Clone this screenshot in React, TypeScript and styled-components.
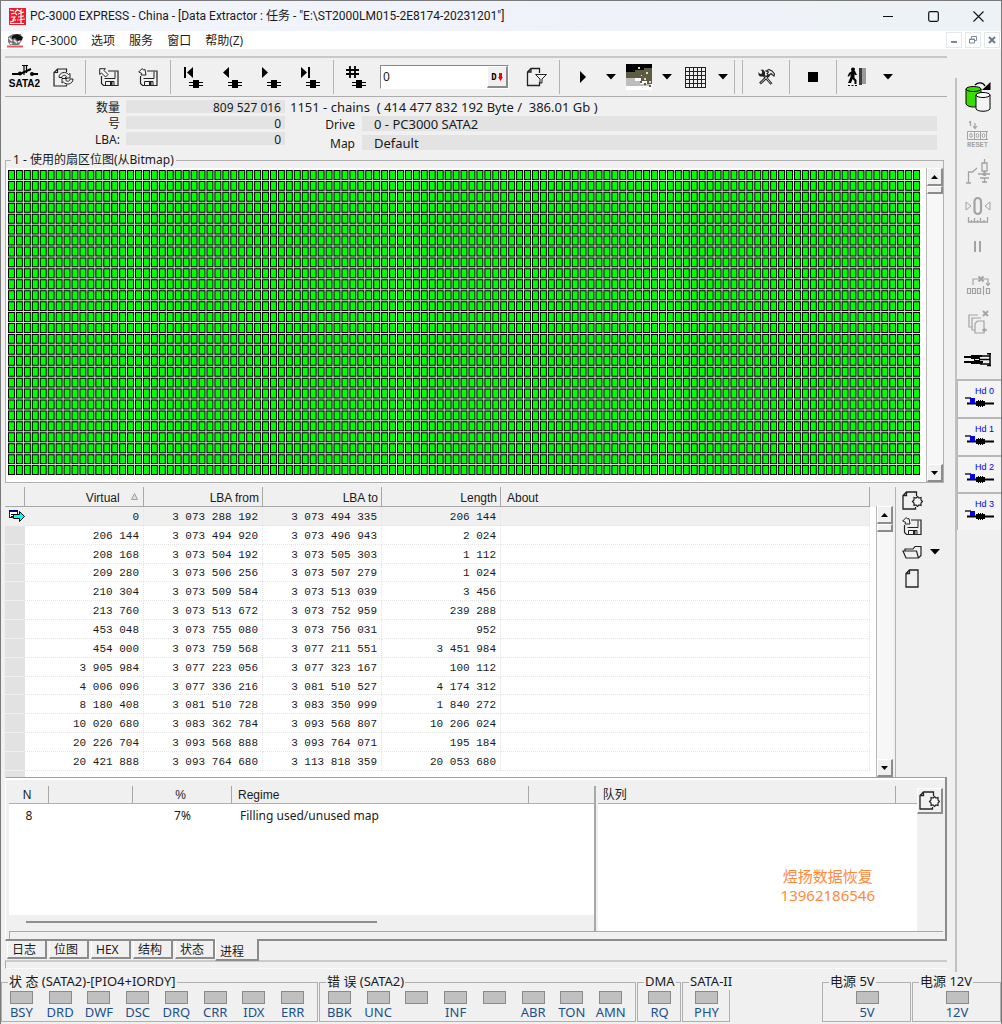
import React from "react";
import styled, { createGlobalStyle, css } from "styled-components";

const GlobalStyle = createGlobalStyle`
  * { box-sizing: border-box; }
  html, body { margin: 0; padding: 0; background: #f0f0f0; }
  body, button, input, legend, th, td {
    font-family: "Noto Sans", "Noto Sans CJK SC", sans-serif;
    font-size: 12px;
    line-height: 16px;
    color: #1a1a1a;
  }
  button { margin: 0; padding: 0; border: 0; background: none; }
  svg { display: block; flex: none; }
`;

/* ---------- frame ---------- */

const Window = styled.div`
  display: flex;
  flex-direction: column;
  min-height: 100vh;
  border: 1px solid #7a7a7a;
  background: #f0f0f0;
`;

const TitleBar = styled.header`
  display: flex;
  align-items: center;
  height: 30px;
  padding-left: 8px;
  background: linear-gradient(90deg, #f2f4fb, #edf2f7);
`;

const TitleText = styled.h1`
  flex: 1;
  margin: 0 0 0 4px;
  font-family: Roboto, "Noto Sans CJK SC", sans-serif;
  font-size: 12px;
  font-weight: 400;
  line-height: 16px;
  white-space: nowrap;
`;

const CaptionButton = styled.button`
  display: grid;
  place-items: center;
  width: 45px;
  height: 30px;
`;

const MenuBar = styled.nav`
  display: flex;
  align-items: center;
  height: 18px;
  padding-left: 6px;
  background: #fff;
`;

const MenuItem = styled.button`
  padding: 2px 7px 0;
  white-space: nowrap;
  font-family: "Open Sans", "Noto Sans CJK SC", sans-serif;
`;

const ChildButtons = styled.div`
  display: flex;
  gap: 3px;
  margin-left: auto;
  padding-right: 1px;
`;

const ChildButton = styled.button`
  display: grid;
  place-items: center;
  width: 16px;
  height: 16px;
  border: 1px solid #e6e9ec;
`;

const Body = styled.div`
  display: flex;
  flex: 1;
`;

const Main = styled.main`
  display: flex;
  flex: 1;
  flex-direction: column;
  min-width: 0;
  padding: 7px 8px 0 4px;
`;

/* ---------- toolbar ---------- */

const Toolbar = styled.div`
  display: flex;
  align-items: center;
  height: 41px;
  border-top: 2px solid #c8c8c8;
  border-bottom: 1px solid #adadad;
`;

const ToolGroup = styled.div<{ $first?: boolean; $last?: boolean }>`
  display: flex;
  align-items: center;
  height: 34px;
  min-width: 8px;
  padding: 0 ${(p) => (p.$first ? 2 : 3)}px 0 ${(p) => (p.$first ? 0 : 3)}px;
  border-right: ${(p) => (p.$last ? 0 : 1)}px solid #b4b4b4;
`;

const ToolButton = styled.button<{ $wide?: boolean }>`
  display: grid;
  place-items: center;
  width: ${(p) => (p.$wide ? 40 : 39)}px;
  height: 34px;
`;

const DropButton = styled.button`
  display: grid;
  place-items: center;
  width: 16px;
  height: 32px;
`;

const SataIcon = styled.span`
  display: flex;
  flex-direction: column;
  align-items: center;
  font-family: "Liberation Sans", sans-serif;
  font-size: 10px;
  font-weight: 700;
  line-height: 12px;
  color: #000;
`;

const NumberBox = styled.label`
  display: flex;
  width: 129px;
  height: 24px;
  margin: 0 8px 0 4px;
  border: 1px solid #8a8a8a;
  border-right-color: #fff;
  border-bottom-color: #fff;
  background: #fff;
`;

const NumberInput = styled.input`
  flex: 1;
  min-width: 0;
  padding: 0 2px;
  border: 0;
  outline: 0;
  background: none;
`;

const raised = css`
  border: 1px solid #fff;
  border-right: 2px solid #8c8c8c;
  border-bottom: 2px solid #8c8c8c;
  background: #f0f0f0;
`;

const NumberMode = styled.button`
  ${raised}
  display: grid;
  place-items: center;
  width: 21px;
  height: 22px;
`;

const ModeText = styled.span`
  display: flex;
  align-items: center;
  gap: 1px;
  font-family: "DejaVu Sans Mono", monospace;
  font-size: 9px;
  font-weight: 700;
  line-height: 10px;
  color: #000;
`;

/* ---------- summary ---------- */

const Summary = styled.section`
  display: flex;
  gap: 5px;
  height: 55px;
  padding: 2px 10px 0 0;
`;

const Totals = styled.dl`
  display: grid;
  grid-template-columns: 115px 159px;
  grid-auto-rows: 13px;
  gap: 3px 6px;
  margin: 1px 0 0;
  line-height: 15px;
  text-align: right;
  dt, dd { margin: 0; }
  dd { padding-right: 4px; background: #e3e3e3; }
`;

const Details = styled.div`
  flex: 1;
  min-width: 0;
`;

const Chains = styled.p`
  margin: 0;
  height: 17px;
  font-size: 13px;
  line-height: 17px;
  white-space: pre;
`;

const Params = styled.dl`
  display: grid;
  grid-template-columns: 65px 1fr;
  grid-auto-rows: 15px;
  gap: 4px 7px;
  margin: 0;
  line-height: 17px;
  dt, dd { margin: 0; }
  dt { text-align: right; }
  dd { padding-left: 12px; font-size: 13px; background: #e3e3e3; }
`;

/* ---------- bitmap ---------- */

const GroupBox = styled.fieldset`
  min-width: 0;
  margin: 0 3px 0 0;
  padding: 0;
  border: 1px solid #b0b0b0;
  legend { margin-left: 5px; padding: 0 2px; white-space: nowrap; }
`;

const BitmapArea = styled.div`
  display: flex;
`;

const BitmapCanvas = styled.div`
  flex: 1;
  padding: 2px 5px 6px 2px;
  background: #fff;
`;

const ScrollTrack = styled.div<{ $top?: number }>`
  display: flex;
  flex: none;
  flex-direction: column;
  width: 17px;
  margin-top: ${(p) => p.$top ?? 0}px;
  border-left: 1px solid #b8b8b8;
  background: #f7f7f7;
`;

const ScrollButton = styled.button`
  ${raised}
  display: grid;
  place-items: center;
  height: 18px;
`;

const ScrollThumb = styled.div`
  ${raised}
  height: 8px;
  margin-bottom: auto;
`;

/* ---------- chain table ---------- */

const ChainPane = styled.section`
  display: flex;
  height: 290px;
  margin-top: 4px;
`;

const ChainTable = styled.table`
  flex: 1;
  width: 100%;
  height: 290px;
  table-layout: fixed;
  border-collapse: separate;
  border-spacing: 0;
  background: #fff;
`;

const HeadCell = styled.th<{ $left?: boolean }>`
  height: 20px;
  padding: 2px 3px 0 6px;
  border-right: 1px solid #a8a8a8;
  border-bottom: 1px solid #a8a8a8;
  background: #f0f0f0;
  font-family: "Liberation Sans", "Noto Sans CJK SC", sans-serif;
  font-weight: 400;
  line-height: 16px;
  text-align: ${(p) => (p.$left ? "left" : "right")};
  white-space: nowrap;
  svg { display: inline-block; margin: 0 2px 2px 8px; }
`;

const NumCell = styled.td`
  padding: 2px 4px 0 0;
  border-right: 1px dotted #e4e4e4;
  border-bottom: 1px dotted #e4e4e4;
  font-family: "Liberation Mono", monospace;
  font-size: 11px;
  line-height: 14px;
  text-align: right;
  white-space: pre;
`;

const GutterCell = styled.td`
  padding: 0 0 0 4px;
  border-bottom: 1px solid #efefef;
  background: #e2e2e2;
`;

const ChainRow = styled.tr<{ $active?: boolean }>`
  background: ${(p) => (p.$active ? "#f0f0f0" : "#fff")};
  ${GutterCell} { ${(p) => p.$active && "background: #f0f0f0;"} }
`;

const TailRow = styled.tr`
  height: 6px;
  td { height: 6px; padding: 0; line-height: 1px; border: 0; }
`;

const TableMargin = styled.div`
  width: 6px;
  margin-top: 20px;
  background: #fff;
`;

const ChainTools = styled.div`
  display: grid;
  grid-template-columns: 26px 20px;
  grid-auto-rows: 26px;
  align-content: start;
  width: 52px;
  margin-left: 2px;
  padding-left: 3px;
  border-left: 1px solid #b4b4b4;
`;

const SmallTool = styled.button<{ $start?: boolean }>`
  display: grid;
  place-items: center;
  grid-column: ${(p) => (p.$start ? 1 : "auto")};
`;

/* ---------- process panel ---------- */

const Panel = styled.section`
  display: flex;
  flex-direction: column;
  height: 164px;
  padding: 6px 2px 0 3px;
  border: 1px solid #fff;
  border-top: 1px solid #a0a0a0;
  border-right: 2px solid #8c8c8c;
  border-bottom: 2px solid #8c8c8c;
  box-shadow: inset 0 2px #fff;
`;

const PanelRow = styled.div`
  display: flex;
  flex: 1;
  min-height: 0;
  padding-top: 2px;
`;

const JobPane = styled.div`
  display: flex;
  flex: 586 1 0;
  flex-direction: column;
  border-right: 2px solid #a8a8a8;
`;

const JobBody = styled.div`
  flex: 1;
  background: #fff;
`;

const JobTable = styled.table`
  width: 100%;
  table-layout: fixed;
  border-spacing: 0;
  td { height: 24px; padding: 0 8px; white-space: nowrap; }
`;

const JobHead = styled.th<{ $left?: boolean; $last?: boolean }>`
  height: 18px;
  padding: 0 9px 0 6px;
  border-right: ${(p) => (p.$last ? 0 : 1)}px solid #a8a8a8;
  border-bottom: 1px solid #b0b0b0;
  background: #f0f0f0;
  font-family: "Liberation Sans", sans-serif;
  font-weight: 400;
  line-height: 16px;
  text-align: ${(p) => (p.$left ? "left" : "center")};
`;

const JobCell = styled.td<{ $center?: boolean }>`
  text-align: ${(p) => (p.$center ? "center" : "left")};
`;

const Slider = styled.div`
  height: 16px;
  padding: 6px 37% 0 17px;
  &::before {
    content: "";
    display: block;
    height: 2px;
    background: #8e8e8e;
  }
`;

const QueuePane = styled.div`
  display: flex;
  flex: 320 1 0;
  flex-direction: column;
  margin-left: 2px;
  background: #fff;
`;

const QueueHead = styled.h2`
  height: 18px;
  margin: 0;
  padding-left: 5px;
  border-bottom: 1px solid #b0b0b0;
  background: linear-gradient(#a8a8a8, #a8a8a8) right 21px top / 1px 100% no-repeat #f0f0f0;
  font-size: 12px;
  font-weight: 400;
  line-height: 18px;
`;

const Watermark = styled.p`
  margin: 63px 42px 0 auto;
  font-size: 15px;
  line-height: 19px;
  text-align: center;
  color: #ff8a3c;
`;

const QueueTools = styled.div`
  width: 26px;
  padding-top: 2px;
`;

const QueueButton = styled.button`
  ${raised}
  display: grid;
  place-items: center;
  width: 26px;
  height: 26px;
`;

const Groove = styled.div`
  height: 8px;
  border-top: 1px solid #a8a8a8;
  border-left: 1px solid #a8a8a8;
`;

const Tabs = styled.div`
  display: flex;
  gap: 2px;
  height: 19px;
  padding-left: 2px;
`;

const Tab = styled.button<{ $active?: boolean }>`
  width: ${(p) => (p.$active ? 44 : 40)}px;
  height: ${(p) => (p.$active ? 20 : 18)}px;
  padding: 1px 6px 0 4px;
  border: 1px solid #fff;
  border-top: 0;
  border-right: 2px solid #8c8c8c;
  border-bottom: 2px solid #8c8c8c;
  background: #f0f0f0;
  line-height: 15px;
  text-align: left;
  ${(p) =>
    p.$active &&
    css`
      z-index: 1;
      margin: -2px 0 0 -2px;
      height: 22px;
      padding-top: 4px;
    `}
`;

const BottomGroove = styled.div`
  height: 9px;
  margin-bottom: 5px;
  border-top: 2px solid #cacaca;
  border-left: 1px solid #a8a8a8;
  border-bottom: 1px solid #fafafa;
`;

/* ---------- side bar ---------- */

const SideBar = styled.aside`
  width: 46px;
  margin: 29px 0 2px;
  border-left: 2px solid #c0c0c0;
`;

const SideList = styled.div`
  display: grid;
  grid-template-rows: repeat(12, 1fr);
  height: 452px;
`;

const SideButton = styled.button`
  display: grid;
  place-items: center;
  padding-right: 2px;
`;

const HeadButton = styled.button`
  display: flex;
  flex-direction: column;
  align-items: flex-end;
  padding: 5px 7px 0 0;
  border-top: 2px solid #b8b8b8;
  border-left: 1px solid #b8b8b8;
  background: #f4f4f4;
  font-family: "Liberation Sans", sans-serif;
  font-size: 9px;
  line-height: 10px;
  color: #0000f0;
`;

/* ---------- status bar ---------- */

const StatusBar = styled.footer`
  display: flex;
  gap: 1px;
  padding-bottom: 2px;
`;

const LampGroup = styled.fieldset<{ $share: number; $single?: boolean }>`
  display: flex;
  flex: ${(p) => p.$share} 1 0;
  min-width: 0;
  height: 48px;
  margin: 0;
  padding: ${(p) => (p.$single ? "0 2px 0 3px" : "0 5px 0 0")};
  border: 1px solid #b0b0b0;
  legend {
    height: 16px;
    margin-left: ${(p) => (p.$single ? 3 : 6)}px;
    padding: 0 1px;
    font-size: 13px;
    line-height: 15px;
    white-space: nowrap;
  }
`;

const StatusGap = styled.div`
  flex: 90 1 0;
`;

const Lamp = styled.div`
  display: flex;
  flex: 1 1 0;
  flex-direction: column;
  align-items: center;
  min-width: 0;
  padding-top: 1px;
  font-size: 13px;
  line-height: 16px;
  color: #1c4f8c;
  &::before {
    content: "";
    width: 21px;
    height: 11px;
    border: 1px solid #8a8a8a;
    background: #c0c0c0;
  }
`;

/* ---------- icons ---------- */

const Icon = ({
  w,
  h,
  crisp,
  children,
}: {
  w: number;
  h: number;
  crisp?: boolean;
  children: React.ReactNode;
}) => (
  <svg
    width={w}
    height={h}
    viewBox={`0 0 ${w} ${h}`}
    fill="none"
    shapeRendering={crisp ? "crispEdges" : "auto"}
    aria-hidden="true"
  >
    {children}
  </svg>
);

const AppLogo = () => (
  <Icon w={17} h={17}>
    <rect width="17" height="17" fill="#ec1c2b" />
    <path d="M1 2l4 1M6 4l3-3M8 2l3 1M11 4l2-3M2 6l4-1 2 2M12 2v13M9 6l6-2M9 9l6-1M2 9h4l-2 3h3M1 14l4-1M8 12l8-1M1 15.500h14" stroke="#fff" strokeWidth="1.100" />
  </Icon>
);

const MenuLogo = () => (
  <Icon w={17} h={15}>
    <path d="M1 4l5-3h8l1 6-3 5H3l-2-3z" fill="#777" />
    <path d="M5 3l5-2 6 3-1 3-4 1-3-3-3 1z" fill="#111" />
    <path d="M2 5l3 3M7 7l3 3M3 10l2 1M11 9l2-1" stroke="#eee" strokeWidth="1.500" />
    <path d="M0 13.500h16" stroke="#e35b62" strokeWidth="2" />
  </Icon>
);

const SataGlyph = () => (
  <Icon w={28} h={14}>
    <path d="M1 10h8l11-5M20 10h7" stroke="#000" strokeWidth="2" />
    <path d="M11 1.500h6" stroke="#000" />
    <path d="M13 1v10M15.500 1v8" stroke="#000" strokeWidth="1.200" />
    <circle cx="9" cy="9.500" r="2" fill="#000" />
    <circle cx="21" cy="10" r="2" fill="#000" />
  </Icon>
);

const RefreshPage = () => (
  <Icon w={21} h={19}>
    <path d="M13.500 4V1H4.500L1 4.500V18h12.500v-1.500M4.500 1v3.500H1" stroke="#222" strokeWidth="1.200" />
    <path d="M6 9.500C6 4 13 3 15.500 6.500l1.500-1V10h-5l1.500-1.500C12 6.500 9 7 9 9.500zM20 11c0 5.500-7 6.500-9.500 3L9 15v-4.500h5L12.500 12c1.500 2 4.500 1.500 4.500-1z" stroke="#222" strokeWidth="1" fill="#f0f0f0" />
  </Icon>
);

const Disk = ({ up }: { up?: boolean }) => (
  <Icon w={20} h={19}>
    <path d="M9 3h10v14.500H4.500l-2-2V8" stroke="#222" strokeWidth="1.200" />
    <path d="M5.500 10.500h10.500V3.500" stroke="#222" />
    <path d="M6.500 17.500v-4h8.500v4" stroke="#222" />
    <path d="M11 14h2.500v3.500H11z" fill="#222" />
    {up ? (
      <path d="M.7.7h5.600L5 2.500l4 4L6.500 9l-4-4L.7 6.500z" fill="#f4f4f4" stroke="#222" />
    ) : (
      <path d="M.7 4l3.500-3.500L5.500 2 7 1.500l1 5.500H3l.7-1.700z" fill="#f4f4f4" stroke="#222" />
    )}
  </Icon>
);

const headStack = (
  <g>
    <path d="M6 16.500h14M6 19.500h14" stroke="#000" strokeWidth="1.200" />
    <path d="M10 14h6v2h-1v1h1v2h-1v1h1v2h-6v-2h1v-1h-1v-2h1v-1h-1z" fill="#000" />
  </g>
);

const marks: Record<string, React.ReactNode> = {
  first: <path d="M1 1h2v11H1zM10 1v11L4 6.500z" fill="#000" />,
  prev: <path d="M7 1v11L1 6.500z" fill="#000" />,
  next: <path d="M1 1v11l6-5.500z" fill="#000" />,
  last: <path d="M1 1v11l6-5.500zM8 1h2v11H8z" fill="#000" />,
  hash: <path d="M4 0v12M9 0v12M0 4h13M0 8h13" stroke="#000" strokeWidth="1.800" />,
};

const StepIcon = ({ mark }: { mark: string }) => (
  <Icon w={21} h={22}>
    {marks[mark]}
    {headStack}
  </Icon>
);

const FilterPage = () => (
  <Icon w={22} h={20}>
    <path d="M13.500 6V1.500H5L1.500 5v13.500h12V15M5 1.500V5H1.500" stroke="#222" strokeWidth="1.300" />
    <path d="M9.500 7.500h11L16 12v4h-2v-4z" fill="#f0f0f0" stroke="#222" />
  </Icon>
);

const DownArrow = () => (
  <Icon w={10} h={6}>
    <path d="M0 0h10L5 5.500z" fill="#000" />
  </Icon>
);

const PlayIcon = () => (
  <Icon w={8} h={12}>
    <path d="M1 0v12l6-6z" fill="#000" />
  </Icon>
);

const TerrainIcon = () => (
  <Icon w={26} h={26} crisp>
    <rect width="26" height="26" fill="#fff" />
    <path d="M0 0h26v9H0z" fill="#000" />
    <path d="M0 8h9V6h9V4h8v16h-5v-3h-6v-3H0z" fill="#5d5c40" />
    <path d="M0 14h9v3h5v3h10v2H0z" fill="#bdbdbd" />
    <path d="M12 3h2v2h-2zM20 8h2v2h-2zM18 14h2v2h-2zM23 17h2v2h-2zM15 11h1v1h-1z" fill="#d8d8cc" />
    <path d="M14 17h2v2h-2zM18 19h2v2h-2zM23 21h2v2h-2z" fill="#5d5c40" />
  </Icon>
);

const GridIcon = () => (
  <Icon w={21} h={21} crisp>
    <path d="M0 .5h21M0 4.500h21M0 8.500h21M0 12.500h21M0 16.500h21M0 20.500h21M.5 0v21M4.500 0v21M8.500 0v21M12.500 0v21M16.500 0v21M20.500 0v21" stroke="#222" />
  </Icon>
);

const ToolsIcon = () => (
  <Icon w={17} h={17}>
    <path d="M2 14.500L11 6M13.500 15L5 5.500" stroke="#222" strokeWidth="2.600" />
    <path d="M2.500 14L9 8M13 14.500L7 7.500" stroke="#f0f0f0" strokeWidth="0.800" />
    <path d="M.5 6V3L2 5l2-.5V2L2.500 1 5 .5 7 3v3L5 7.500H2z" fill="#222" />
    <path d="M8 2l3-1.500L14 2l2.500 3-.5 2-2-1.500-1-1-2 2-2-2 1.500-1.500z" fill="#f0f0f0" stroke="#222" strokeWidth="1.100" />
  </Icon>
);

const StopIcon = () => (
  <Icon w={10} h={10} crisp>
    <rect width="10" height="10" fill="#000" />
  </Icon>
);

const ExitIcon = () => (
  <Icon w={26} h={20}>
    <circle cx="6" cy="2.500" r="2" fill="#000" />
    <path d="M5 4h3l2 4h-2l-.5-1V11l2 2v4H7.500v-3L5.500 12 4 16H1l2.500-6V7L2 9.500H.5L2 6z" fill="#000" />
    <path d="M1 18.500h9" stroke="#000" strokeDasharray="2 1.500" />
    <path d="M12 1h3v17h-3z" fill="#3c3c3c" />
    <path d="M15 1h4v16h-4z" fill="#999" />
  </Icon>
);

const NewPage = () => (
  <Icon w={21} h={19}>
    <path d="M14.500 5V1H4.500L1 4.500V18h12.500v-2M4.500 1v3.500H1" stroke="#222" strokeWidth="1.300" />
    <path d="M12 6.500l2 .5 1.500-1.500L17 7l2-.5v2.500l1.500 1.500L19 12v2.500L17 14l-1.500 1.500L14 14l-2 .5V12l-1.500-1.500L12 9z" stroke="#222" strokeWidth="1.200" fill="#f4f4f4" />
  </Icon>
);

const OpenFolder = () => (
  <Icon w={21} h={14}>
    <path d="M3 6V4h8l2-2.500h6v9L16.500 13H4L1 6h13.500l2 7" stroke="#222" strokeWidth="1.200" />
  </Icon>
);

const BlankPage = () => (
  <Icon w={14} h={19}>
    <path d="M13 1H4.500L1 4.500V18h12zM4.500 1v3.500H1" stroke="#222" strokeWidth="1.300" />
  </Icon>
);

const RowPointer = () => (
  <Icon w={16} h={13} crisp>
    <path d="M.5 1.500h8v7h-8z" fill="#fff" stroke="#222" />
    <path d="M0 1h9v2H0z" fill="#000080" />
    <path d="M2 5h5M2 7h3" stroke="#000" />
    <path d="M4.500 5.500h6v-3l5 5-5 5v-3h-6z" fill="#00ffff" stroke="#000" shapeRendering="auto" />
  </Icon>
);

const SortMark = () => (
  <Icon w={7} h={7}>
    <path d="M3.500.5l3 6h-6z" stroke="#a0a0a0" fill="#ddd" />
  </Icon>
);

const ScrollArrow = ({ up }: { up?: boolean }) => (
  <Icon w={7} h={4}>
    <path d={up ? "M0 4h7L3.500 0z" : "M0 0h7L3.500 4z"} fill="#000" />
  </Icon>
);

const G = "#a3a3a3";

const sideIcons: { name: string; art: React.ReactNode }[] = [
  {
    name: "Power",
    art: (
      <Icon w={26} h={32}>
        <path d="M1 8v15c2 4 13 4 15 0V8z" fill="#38dc00" stroke="#000" />
        <ellipse cx="8.500" cy="8" rx="7.500" ry="2.500" fill="#38dc00" stroke="#000" />
        <path d="M11 14v14c2 3 12 3 14 0V14z" fill="#f4f4f4" stroke="#000" />
        <ellipse cx="18" cy="14" rx="7" ry="2.500" fill="#fff" stroke="#000" />
        <path d="M10 4c3-3 8-3 10 1" stroke="#000" strokeWidth="1.200" />
        <path d="M25.500 1v8H17z" fill="#000" />
      </Icon>
    ),
  },
  {
    name: "Reset",
    art: (
      <Icon w={24} h={28}>
        <g stroke={G}>
          <path d="M3 2.500l1.500-1V6M9 3v5M7 6l2 2.500L11 6" strokeWidth="1.200" />
          <path d="M1.500 11.500H22M1.500 19.500H22M1.500 11.500v8M8.500 11.500v8M14.500 11.500v8M20.500 11.500v8" />
          <ellipse cx="5" cy="15.500" rx="1.300" ry="2" />
          <ellipse cx="11.500" cy="15.500" rx="1.300" ry="2" />
          <ellipse cx="17.500" cy="15.500" rx="1.300" ry="2" />
        </g>
        <text x="1" y="27" fill={G} fontFamily="Liberation Mono, monospace" fontSize="7" fontWeight="700">
          RESET
        </text>
      </Icon>
    ),
  },
  {
    name: "Circuit",
    art: (
      <Icon w={25} h={26}>
        <path d="M0 24h5M2.500 24V13h4L11 9M18.500 0v4M16 4h5v8h-5zM18.500 12v5M12 15h12M14 19h9M16 23h5M18.500 19v5" stroke={G} strokeWidth="1.300" />
        <circle cx="18.500" cy="15" r="2" fill={G} />
      </Icon>
    ),
  },
  {
    name: "Zero position",
    art: (
      <Icon w={26} h={28}>
        <path d="M1 6v8l5-4zM25 6v8l-5-4z" stroke={G} />
        <rect x="9.500" y="2" width="6.500" height="16" rx="3.200" stroke={G} strokeWidth="2.200" />
        <path d="M3.500 21v5h19v-5M6.500 24v2M9.500 22v4M12.500 24v2M15.500 22v4M19 24v2" stroke={G} strokeWidth="1.300" />
      </Icon>
    ),
  },
  {
    name: "Pause",
    art: (
      <Icon w={8} h={12} crisp>
        <path d="M0 0h2v11H0zM5 0h2v11H5z" fill={G} />
      </Icon>
    ),
  },
  {
    name: "Skip sector",
    art: (
      <Icon w={25} h={20}>
        <path d="M1.500 13.500h3v5h-3zM6.500 13.500h3v5h-3zM11.500 13.500h3v5h-3zM17.500 11v9M20.500 13.500h3v5h-3zM7 10V4h15v6M20 8l2 2.500L24 8" stroke={G} strokeWidth="1.200" />
        <path d="M12.500 1.500l5 5M17.500 1.500l-5 5" stroke={G} strokeWidth="2" />
      </Icon>
    ),
  },
  {
    name: "Clear pages",
    art: (
      <Icon w={25} h={26}>
        <path d="M6 17H3V5h9M8.500 20H6V8h9M11.500 11H18v12H9V13.500z" stroke={G} strokeWidth="1.200" />
        <path d="M17 1l5 5M22 1l-5 5" stroke={G} strokeWidth="1.800" />
        <path d="M16 20h5M18.500 18v4" stroke={G} strokeWidth="1.500" />
      </Icon>
    ),
  },
  {
    name: "Heads",
    art: (
      <Icon w={28} h={14}>
        <path d="M0 4h8M0 9h19" stroke="#000" strokeWidth="2" />
        <path d="M7 2h11v2h-2v5h2v2H7V9h3V6H7z" fill="#000" />
        <path d="M16 3h10M16 6.500h10M16 11h10" stroke="#000" strokeWidth="1.300" />
        <path d="M26 0v13M23 .7h4M23 12.500h4" stroke="#000" strokeWidth="1.500" />
        <path d="M11 6.500h4" stroke="#f0f0f0" />
      </Icon>
    ),
  },
];

const HeadIcon = () => (
  <Icon w={29} h={11}>
    <path d="M0 2h6" stroke="#000" strokeWidth="1.300" />
    <path d="M2 7.500h27" stroke="#000" strokeWidth="2" />
    <path d="M5 2h5v5H5z" fill="#0000f0" />
    <path d="M11 5h2V4h1v1h1V4h1v1h1V4h1v1h2v5h-2v1h-1v-1h-1v1h-1v-1h-1v1h-1v-1h-2z" fill="#000" />
  </Icon>
);

/* ---------- data ---------- */

const chainRows = [
  ["0", "3 073 288 192", "3 073 494 335", "206 144"],
  ["206 144", "3 073 494 920", "3 073 496 943", "2 024"],
  ["208 168", "3 073 504 192", "3 073 505 303", "1 112"],
  ["209 280", "3 073 506 256", "3 073 507 279", "1 024"],
  ["210 304", "3 073 509 584", "3 073 513 039", "3 456"],
  ["213 760", "3 073 513 672", "3 073 752 959", "239 288"],
  ["453 048", "3 073 755 080", "3 073 756 031", "952"],
  ["454 000", "3 073 759 568", "3 077 211 551", "3 451 984"],
  ["3 905 984", "3 077 223 056", "3 077 323 167", "100 112"],
  ["4 006 096", "3 077 336 216", "3 081 510 527", "4 174 312"],
  ["8 180 408", "3 081 510 728", "3 083 350 999", "1 840 272"],
  ["10 020 680", "3 083 362 784", "3 093 568 807", "10 206 024"],
  ["20 226 704", "3 093 568 888", "3 093 764 071", "195 184"],
  ["20 421 888", "3 093 764 680", "3 113 818 359", "20 053 680"],
];

const steps = [
  ["first", "First"],
  ["prev", "Previous"],
  ["next", "Next"],
  ["last", "Last"],
];

const lampGroups = [
  { title: "状 态 (SATA2)-[PIO4+IORDY]", share: 310, lamps: ["BSY", "DRD", "DWF", "DSC", "DRQ", "CRR", "IDX", "ERR"] },
  { title: "错 误 (SATA2)", share: 310, lamps: ["BBK", "UNC", "", "INF", "", "ABR", "TON", "AMN"] },
  { title: "DMA", share: 37, lamps: ["RQ"] },
  { title: "SATA-II", share: 41, lamps: ["PHY"] },
];

const powerGroups = [
  { title: "电源 5V", share: 82, lamps: ["5V"] },
  { title: "电源 12V", share: 82, lamps: ["12V"] },
];

const tabs = ["日志", "位图", "HEX", "结构", "状态", "进程"];

/* ---------- parts ---------- */

const COLS = 115;
const ROWS = 28;

const SectorMap = () => {
  let frames = "";
  let fills = "";
  for (let r = 0; r < ROWS; r++) {
    for (let c = 0; c < COLS; c++) {
      frames += `M${c * 8} ${r * 11}h7v10h-7z`;
      fills += `M${c * 8 + 1} ${r * 11 + 1}h5v8h-5z`;
    }
  }
  return (
    <svg width="100%" height="306" viewBox={`0 0 ${COLS * 8} ${ROWS * 11}`} preserveAspectRatio="none" role="img" aria-label="Bitmap">
      <rect width={COLS * 8 - 1} height={ROWS * 11 - 1} fill="#dcdcdc" />
      <path d={frames} fill="#000" />
      <path d={fills} fill="#00ff00" />
    </svg>
  );
};

const ScrollBar = ({ top }: { top?: number }) => (
  <ScrollTrack $top={top}>
    <ScrollButton aria-label="Scroll up">
      <ScrollArrow up />
    </ScrollButton>
    <ScrollThumb />
    <ScrollButton aria-label="Scroll down">
      <ScrollArrow />
    </ScrollButton>
  </ScrollTrack>
);

const Lamps = ({ title, share, lamps }: { title: string; share: number; lamps: string[] }) => (
  <LampGroup $share={share} $single={lamps.length === 1}>
    <legend>{title}</legend>
    {lamps.map((name, i) => (
      <Lamp key={i}>{name}</Lamp>
    ))}
  </LampGroup>
);

export default function App() {
  return (
    <Window>
      <GlobalStyle />
      <TitleBar>
        <AppLogo />
        <TitleText>PC-3000 EXPRESS - China - [Data Extractor : 任务 - "E:\ST2000LM015-2E8174-20231201"]</TitleText>
        <CaptionButton aria-label="Minimize">
          <Icon w={11} h={11} crisp><path d="M0 5.500h10" stroke="#111" /></Icon>
        </CaptionButton>
        <CaptionButton aria-label="Maximize">
          <Icon w={11} h={11}><rect x=".7" y=".7" width="9.600" height="9.600" rx="1.500" stroke="#111" strokeWidth="1.200" /></Icon>
        </CaptionButton>
        <CaptionButton aria-label="Close">
          <Icon w={11} h={11}><path d="M.5.5l10 10M10.500.5l-10 10" stroke="#111" strokeWidth="1.100" /></Icon>
        </CaptionButton>
      </TitleBar>
      <MenuBar>
        <MenuLogo />
        {["PC-3000", "选项", "服务", "窗口", "帮助(Z)"].map((m) => (
          <MenuItem key={m}>{m}</MenuItem>
        ))}
        <ChildButtons>
          <ChildButton aria-label="Minimize task">
            <Icon w={8} h={8} crisp><path d="M1 6h6" stroke="#7b8a99" strokeWidth="2" /></Icon>
          </ChildButton>
          <ChildButton aria-label="Restore task">
            <Icon w={8} h={8}><path d="M2.500 2.500v-2h5v4h-2M.5 3h5v4h-5zM.5 3.500h5" stroke="#7b8a99" /></Icon>
          </ChildButton>
          <ChildButton aria-label="Close task">
            <Icon w={8} h={8}><path d="M1 1l6 6M7 1L1 7" stroke="#6b7a89" strokeWidth="2" /></Icon>
          </ChildButton>
        </ChildButtons>
      </MenuBar>

      <Body>
        <Main>
          <Toolbar role="toolbar">
            <ToolGroup $first>
              <ToolButton><SataIcon><SataGlyph />SATA2</SataIcon></ToolButton>
              <ToolButton aria-label="Refresh"><RefreshPage /></ToolButton>
            </ToolGroup>
            <ToolGroup>
              <ToolButton aria-label="Load"><Disk up /></ToolButton>
              <ToolButton aria-label="Save"><Disk /></ToolButton>
            </ToolGroup>
            <ToolGroup>
              {steps.map(([mark, name]) => (
                <ToolButton key={mark} aria-label={name}><StepIcon mark={mark} /></ToolButton>
              ))}
            </ToolGroup>
            <ToolGroup>
              <ToolButton aria-label="Go to number"><StepIcon mark="hash" /></ToolButton>
              <NumberBox>
                <NumberInput defaultValue="0" aria-label="Number" />
                <NumberMode aria-label="Decimal">
                  <ModeText>
                    D
                    <Icon w={5} h={8}><path d="M1 0h3v4h1L2.500 8 0 4h1z" fill="#f00" /></Icon>
                  </ModeText>
                </NumberMode>
              </NumberBox>
              <ToolButton aria-label="Filter"><FilterPage /></ToolButton>
            </ToolGroup>
            <ToolGroup>
              <ToolButton $wide aria-label="Start"><PlayIcon /></ToolButton>
              <DropButton aria-label="Start options"><DownArrow /></DropButton>
              <ToolButton $wide aria-label="Map view"><TerrainIcon /></ToolButton>
              <DropButton aria-label="Map options"><DownArrow /></DropButton>
              <ToolButton $wide aria-label="Grid view"><GridIcon /></ToolButton>
              <DropButton aria-label="Grid options"><DownArrow /></DropButton>
            </ToolGroup>
            <ToolGroup />
            <ToolGroup>
              <ToolButton $wide aria-label="Tools"><ToolsIcon /></ToolButton>
            </ToolGroup>
            <ToolGroup>
              <ToolButton $wide aria-label="Stop"><StopIcon /></ToolButton>
            </ToolGroup>
            <ToolGroup $last>
              <ToolButton $wide aria-label="Exit"><ExitIcon /></ToolButton>
              <DropButton aria-label="Exit options"><DownArrow /></DropButton>
            </ToolGroup>
          </Toolbar>

          <Summary>
            <Totals>
              <dt>数量</dt>
              <dd>809 527 016</dd>
              <dt>号</dt>
              <dd>0</dd>
              <dt>LBA:</dt>
              <dd>0</dd>
            </Totals>
            <Details>
              <Chains>{"1151 - chains  ( 414 477 832 192 Byte /  386.01 Gb )"}</Chains>
              <Params>
                <dt>Drive</dt>
                <dd>0 - PC3000 SATA2</dd>
                <dt>Map</dt>
                <dd>Default</dd>
              </Params>
            </Details>
          </Summary>

          <GroupBox>
            <legend>1 - 使用的扇区位图(从Bitmap)</legend>
            <BitmapArea>
              <BitmapCanvas>
                <SectorMap />
              </BitmapCanvas>
              <ScrollBar />
            </BitmapArea>
          </GroupBox>

          <ChainPane>
            <ChainTable>
              <colgroup>
                <col style={{ width: 20 }} />
                <col style={{ width: 119 }} />
                <col style={{ width: 119 }} />
                <col style={{ width: 119 }} />
                <col style={{ width: 119 }} />
                <col />
              </colgroup>
              <thead>
                <tr>
                  <HeadCell aria-label="Current" />
                  <HeadCell>Virtual <SortMark /></HeadCell>
                  <HeadCell>LBA from</HeadCell>
                  <HeadCell>LBA to</HeadCell>
                  <HeadCell>Length</HeadCell>
                  <HeadCell $left>About</HeadCell>
                </tr>
              </thead>
              <tbody>
                {chainRows.map((row, i) => (
                  <ChainRow key={row[1]} $active={i === 0}>
                    <GutterCell>{i === 0 && <RowPointer />}</GutterCell>
                    {row.map((v, j) => (
                      <NumCell key={j}>{v}</NumCell>
                    ))}
                    <NumCell />
                  </ChainRow>
                ))}
                <TailRow>
                  <GutterCell />
                  <td colSpan={5} />
                </TailRow>
              </tbody>
            </ChainTable>
            <TableMargin />
            <ScrollBar top={19} />
            <ChainTools>
              <SmallTool $start aria-label="New map"><NewPage /></SmallTool>
              <SmallTool $start aria-label="Save map"><Disk /></SmallTool>
              <SmallTool $start aria-label="Open map"><OpenFolder /></SmallTool>
              <SmallTool aria-label="Open options"><DownArrow /></SmallTool>
              <SmallTool $start aria-label="Blank map"><BlankPage /></SmallTool>
            </ChainTools>
          </ChainPane>

          <Panel>
            <PanelRow>
              <JobPane>
                <JobBody>
                  <JobTable>
                    <colgroup>
                      <col style={{ width: 40 }} />
                      <col style={{ width: 84 }} />
                      <col style={{ width: 99 }} />
                      <col />
                      <col style={{ width: 65 }} />
                    </colgroup>
                    <thead>
                      <tr>
                        <JobHead>N</JobHead>
                        <JobHead />
                        <JobHead>%</JobHead>
                        <JobHead $left>Regime</JobHead>
                        <JobHead $last />
                      </tr>
                    </thead>
                    <tbody>
                      <tr>
                        <JobCell $center>8</JobCell>
                        <JobCell />
                        <JobCell $center>7%</JobCell>
                        <JobCell>Filling used/unused map</JobCell>
                        <JobCell />
                      </tr>
                    </tbody>
                  </JobTable>
                </JobBody>
                <Slider />
              </JobPane>
              <QueuePane>
                <QueueHead>队列</QueueHead>
                <Watermark>
                  煜扬数据恢复
                  <br />
                  13962186546
                </Watermark>
              </QueuePane>
              <QueueTools>
                <QueueButton aria-label="New queue"><NewPage /></QueueButton>
              </QueueTools>
            </PanelRow>
            <Groove />
          </Panel>

          <Tabs role="tablist">
            {tabs.map((t) => (
              <Tab key={t} role="tab" aria-selected={t === "进程"} $active={t === "进程"}>
                {t}
              </Tab>
            ))}
          </Tabs>
          <BottomGroove />
        </Main>

        <SideBar>
          <SideList>
            {sideIcons.map((s) => (
              <SideButton key={s.name} aria-label={s.name}>{s.art}</SideButton>
            ))}
            {["Hd 0", "Hd 1", "Hd 2", "Hd 3"].map((h) => (
              <HeadButton key={h}>
                {h}
                <HeadIcon />
              </HeadButton>
            ))}
          </SideList>
        </SideBar>
      </Body>

      <StatusBar>
        {lampGroups.map((g) => (
          <Lamps key={g.title} {...g} />
        ))}
        <StatusGap />
        {powerGroups.map((g) => (
          <Lamps key={g.title} {...g} />
        ))}
      </StatusBar>
    </Window>
  );
}
